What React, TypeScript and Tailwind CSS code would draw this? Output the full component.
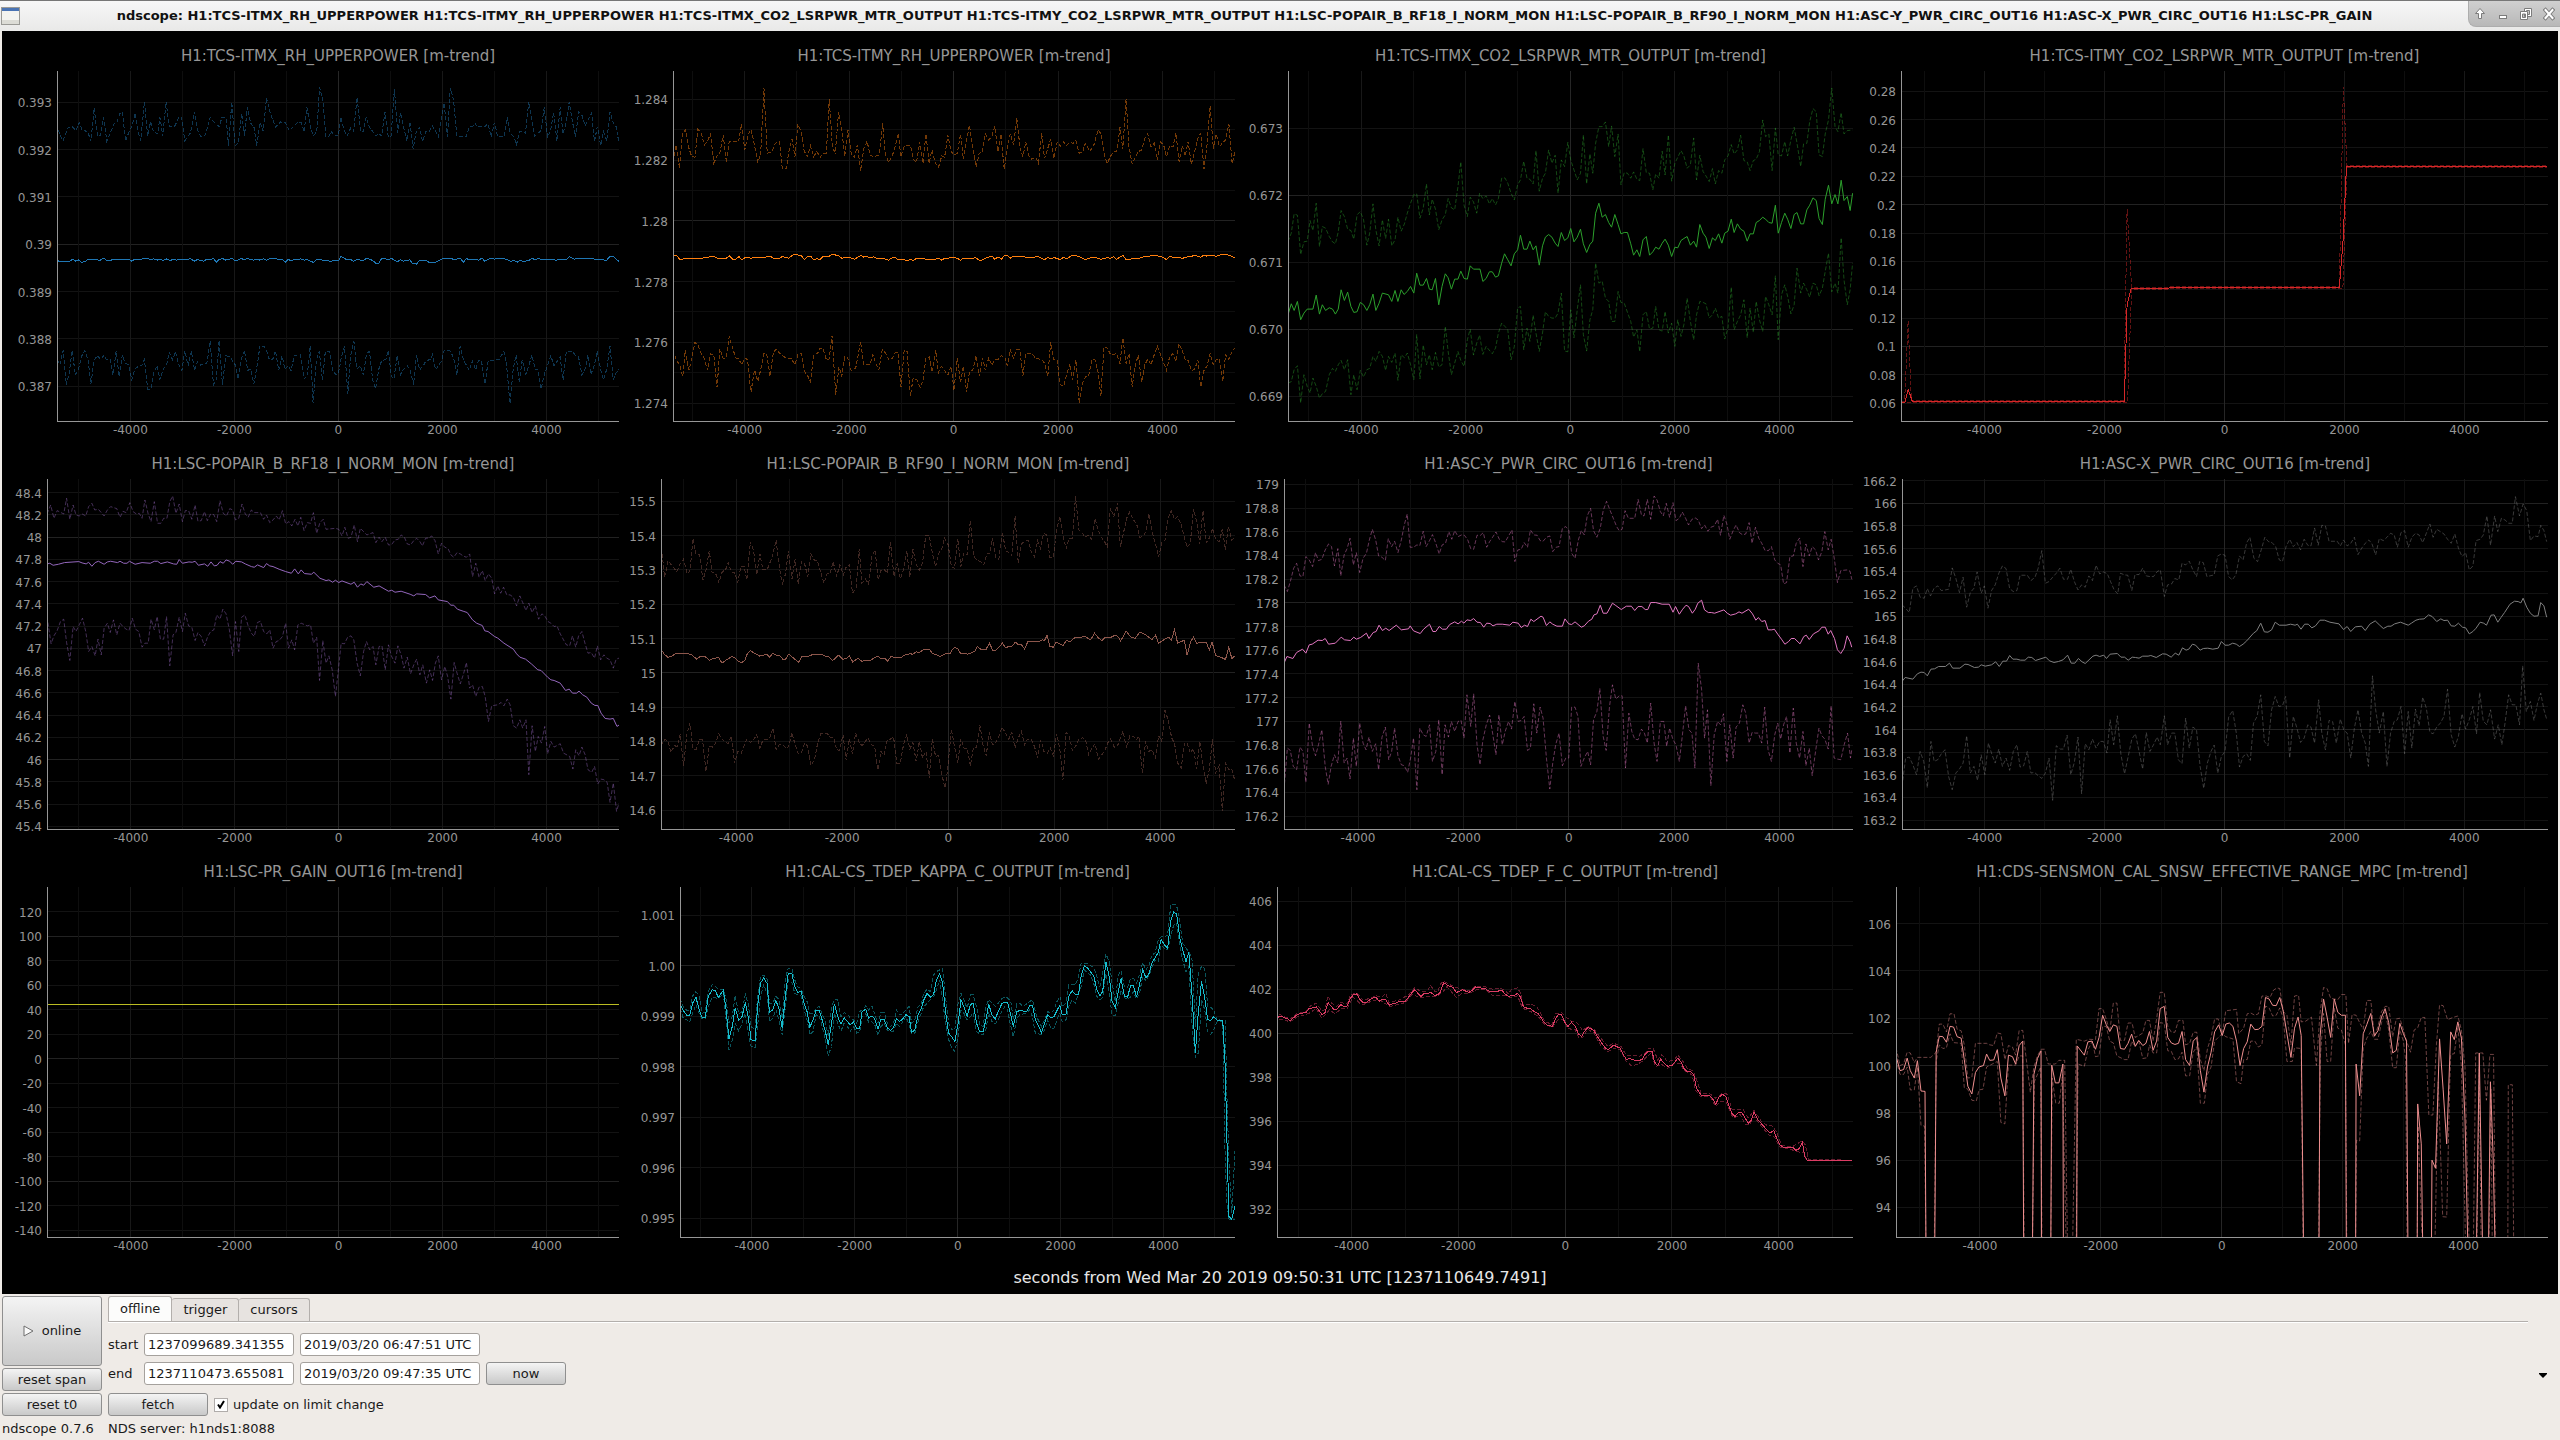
import React, { useState } from 'react';

type Panel = {
  title: string;
  axis: string; // left padding that holds the y tick labels
  x: [number, number];
  y: [number, number];
  ticks: string;
  strong: number[];
  minor?: number[];
  color: string;
  view: string;
  mean: string;
  max: string;
  min: string;
};

const X_TICKS = [-5000, -4000, -3000, -2000, -1000, 0, 1000, 2000, 3000, 4000, 5000];
const X_LABELS = [-4000, -2000, 0, 2000, 4000];

const PANELS: Panel[] = [
  {
    title: 'H1:TCS-ITMX_RH_UPPERPOWER',
    axis: 'pl-[46px]',
    x: [-5410, 5395],
    y: [0.386268, 0.39366],
    ticks: '0.393 0.392 0.391 0.39 0.389 0.388 0.387',
    strong: [0.39],
    color: '#1f77b4',
    view: '143 213 1376 1051',
    mean: '143,782 150,785 175,784 181,778 189,784 195,780 203,787 212,786 219,778 240,779 248,782 257,775 265,782 275,781 285,778 320,778 325,784 333,779 347,779 357,775 366,776 373,781 380,777 388,781 396,778 403,782 412,777 420,782 427,779 435,781 443,778 457,779 470,777 479,784 487,779 502,784 510,778 518,780 526,776 533,787 540,779 548,776 556,781 563,779 572,775 579,784 594,776 602,780 608,776 625,781 633,778 640,781 648,777 656,781 664,777 678,775 686,780 694,778 702,787 709,778 716,784 724,778 733,780 740,777 748,781 755,779 771,788 778,780 801,781 810,784 824,783 833,783 838,770 846,775 853,780 862,779 869,785 877,779 893,782 901,775 916,782 923,790 931,790 938,776 946,776 954,780 962,776 976,786 984,780 992,784 1007,780 1013,790 1023,793 1031,781 1046,781 1053,787 1070,787 1084,779 1091,775 1107,775 1115,780 1130,775 1138,787 1145,776 1153,780 1168,778 1175,781 1184,775 1190,784 1206,775 1214,778 1222,776 1245,778 1253,785 1262,782 1270,787 1278,781 1285,785 1298,782 1306,775 1313,780 1320,777 1340,779 1350,779 1365,781 1375,778 1390,780 1397,771 1410,778 1425,775 1452,775 1460,779 1489,781 1497,769 1505,770 1512,778 1519,785',
    max: '143,372 150,405 158,422 170,383 180,380 190,392 197,368 205,392 218,394 226,424 234,324 242,408 250,405 257,352 265,424 275,395 282,373 290,367 297,340 303,337 311,424 318,400 327,378 334,340 341,395 348,422 357,306 365,408 372,366 380,398 390,400 395,352 402,408 410,306 418,380 432,378 440,354 448,352 456,422 470,398 480,336 487,390 495,410 505,407 511,385 518,352 530,370 540,380 547,352 557,354 563,437 571,306 579,437 587,430 595,340 602,408 609,322 617,370 625,380 632,437 640,368 648,394 656,294 664,335 678,382 690,366 702,368 712,392 733,366 741,368 748,396 755,322 763,380 771,408 779,395 786,262 794,300 801,410 810,408 814,394 822,408 832,408 838,352 846,390 853,408 862,385 869,395 878,292 886,395 893,395 900,352 908,382 924,408 930,400 938,408 946,336 954,410 961,408 969,266 977,398 984,338 992,385 1000,424 1007,366 1015,448 1022,398 1031,382 1038,424 1046,394 1055,394 1062,378 1070,394 1077,410 1085,350 1091,310 1099,410 1106,264 1114,300 1122,408 1145,410 1153,380 1163,378 1168,370 1170,380 1190,380 1198,372 1206,410 1214,368 1222,410 1238,410 1245,352 1253,400 1262,412 1268,434 1276,394 1290,400 1298,306 1306,366 1313,408 1328,392 1336,322 1344,412 1351,395 1359,338 1367,424 1375,322 1382,402 1390,366 1397,306 1405,366 1413,410 1420,336 1428,345 1436,378 1452,340 1459,424 1466,380 1474,437 1481,395 1489,422 1497,336 1505,370 1512,380 1519,430',
    min: '143,1080 150,1095 158,1052 166,1155 173,1120 180,1052 188,1125 196,1108 203,1070 211,1053 219,1080 226,1152 234,1080 242,1068 250,1080 257,1068 265,1080 273,1078 280,1125 288,1053 295,1130 303,1066 310,1090 318,1095 326,1140 334,1108 342,1100 350,1098 357,1080 365,1168 373,1168 380,1120 388,1098 395,1140 403,1108 411,1098 418,1058 426,1080 433,1056 441,1095 449,1112 456,1053 464,1098 472,1054 480,1112 487,1085 495,1096 510,1090 518,1025 526,1155 533,1140 540,1022 548,1155 556,1068 566,1070 579,1095 586,1138 594,1080 602,1052 610,1112 617,1108 625,1153 633,1098 640,1038 650,1040 656,1052 663,1080 671,1080 678,1053 686,1112 694,1068 701,1108 709,1098 716,1112 724,1068 738,1064 748,1138 756,1125 763,1038 770,1210 778,1080 785,1055 793,1140 800,1055 810,1056 818,1112 826,1125 832,1122 840,1068 847,1040 855,1182 862,1066 870,1025 877,1108 885,1098 893,1125 901,1062 908,1055 916,1140 923,1168 931,1108 938,1082 948,1080 954,1053 962,1130 968,1138 976,1066 984,1125 992,1108 1000,1098 1007,1108 1016,1155 1023,1066 1031,1110 1040,1098 1047,1082 1057,1080 1062,1066 1070,1110 1084,1085 1091,1053 1107,1054 1115,1080 1122,1125 1130,1040 1138,1080 1152,1112 1160,1085 1168,1110 1175,1082 1182,1082 1191,1152 1199,1082 1225,1080 1237,1055 1244,1098 1252,1212 1260,1108 1267,1066 1275,1150 1282,1080 1291,1125 1306,1066 1314,1110 1320,1110 1328,1168 1336,1125 1352,1068 1360,1098 1375,1072 1382,1140 1390,1054 1405,1056 1413,1068 1420,1072 1428,1125 1436,1108 1443,1066 1450,1125 1459,1095 1466,1055 1474,1110 1481,1140 1489,1108 1497,1040 1505,1140 1512,1120 1519,1108',
  },
  {
    title: 'H1:TCS-ITMY_RH_UPPERPOWER',
    axis: 'pl-[44px]',
    x: [-5371, 5386],
    y: [1.273408, 1.284932],
    ticks: '1.284 1.282 1.28 1.278 1.276 1.274',
    strong: [1.28],
    minor: [1.283, 1.281, 1.279, 1.277, 1.275],
    color: '#ff7f0e',
    view: '82 213 1378 1051',
    mean: '82,770 90,766 98,778 106,778 113,775 155,775 166,772 182,770 190,775 213,775 221,768 228,778 236,778 244,770 251,781 259,773 275,775 282,773 305,773 320,769 328,775 343,775 350,770 366,775 373,768 381,763 397,768 404,779 412,770 420,770 427,779 435,777 443,779 450,769 465,769 473,763 488,768 496,775 511,772 527,778 542,767 550,772 558,769 565,775 573,771 580,775 596,775 611,781 620,773 627,773 634,780 649,780 656,784 664,779 671,782 680,775 695,775 702,779 725,778 733,775 741,781 748,775 771,774 779,775 787,781 794,775 817,775 825,774 833,782 841,780 848,775 864,769 871,778 879,771 887,778 894,768 902,767 909,775 917,769 940,769 947,773 962,772 978,771 993,780 1001,773 1009,778 1016,773 1031,779 1040,772 1047,777 1062,766 1078,770 1093,779 1109,773 1124,775 1131,779 1147,773 1155,776 1162,770 1170,779 1178,771 1185,767 1193,779 1231,774 1240,769 1246,771 1254,767 1277,769 1292,779 1300,769 1308,773 1323,773 1331,776 1338,772 1353,770 1361,766 1376,772 1384,766 1391,769 1399,766 1414,769 1430,763 1445,766 1460,774',
    max: '82,485 90,435 98,505 105,398 113,390 121,445 128,470 136,472 143,388 151,400 159,435 166,425 174,402 182,490 190,468 197,458 205,405 213,488 220,424 235,424 243,425 250,372 258,450 266,405 273,388 281,430 290,488 297,460 305,264 313,460 325,455 333,430 343,426 350,505 360,507 366,455 374,418 381,470 388,372 396,395 404,455 412,470 419,438 427,470 435,455 443,472 450,460 458,460 465,297 473,445 480,458 488,336 496,390 503,470 511,390 519,462 527,472 534,435 542,512 550,445 558,424 565,465 573,470 588,466 596,369 603,465 611,487 620,466 627,440 634,400 641,470 650,436 664,437 672,478 679,488 687,426 695,490 702,402 710,490 717,450 725,488 733,502 741,468 748,472 756,405 764,455 771,465 779,460 787,402 794,478 802,420 809,375 817,445 825,502 833,460 840,458 848,402 856,420 863,412 871,380 879,455 886,402 894,507 902,445 909,402 917,435 925,354 933,445 940,470 947,426 955,468 962,478 971,472 978,490 986,400 993,475 1001,445 1008,418 1016,475 1024,426 1032,438 1040,426 1046,438 1055,428 1063,430 1070,422 1078,460 1086,458 1093,430 1104,455 1115,432 1124,390 1132,402 1140,470 1147,490 1155,468 1162,456 1170,455 1178,382 1185,448 1193,297 1200,440 1208,492 1216,470 1223,455 1231,450 1239,415 1246,402 1254,440 1262,430 1269,480 1277,426 1285,435 1292,470 1300,437 1308,440 1315,400 1323,485 1331,438 1338,468 1345,425 1353,492 1361,455 1368,418 1376,400 1384,508 1391,440 1399,318 1407,448 1414,402 1422,440 1430,428 1437,420 1445,372 1453,490 1460,455',
    min: '82,1050 90,1080 98,1095 106,1130 112,1052 121,1112 128,1075 136,1028 144,1038 151,1060 159,1078 167,1112 174,1062 182,1065 190,1163 197,1048 205,1075 212,1075 220,1010 228,1045 236,1075 243,1078 251,1095 258,1075 265,1080 273,1178 282,1110 290,1145 297,1110 305,1062 312,1065 320,1130 328,1058 335,1048 343,1060 358,1074 372,1076 381,1095 389,1062 397,1062 404,1115 412,1128 419,1145 427,1065 436,1062 443,1045 450,1046 458,1080 465,1078 472,1008 481,1185 489,1102 496,1130 503,1070 510,1072 519,1112 530,1105 542,1026 550,1096 565,1095 572,1065 580,1095 587,1110 595,1050 603,1060 611,1080 620,1075 627,1058 634,1060 641,1162 649,1050 656,1056 664,1188 671,1135 680,1140 688,1163 695,1142 702,1075 710,1072 718,1118 726,1052 733,1118 740,1100 756,1126 764,1100 771,1172 779,1076 787,1148 794,1100 802,1178 809,1115 817,1112 825,1068 833,1130 841,1075 848,1112 856,1075 864,1096 871,1080 879,1080 887,1068 895,1072 902,1098 909,1050 917,1075 925,1050 932,1048 940,1128 947,1062 962,1060 970,1075 986,1080 993,1090 1001,1130 1008,1028 1016,1080 1024,1082 1031,1155 1040,1158 1055,1092 1062,1140 1070,1080 1078,1210 1086,1150 1094,1130 1101,1128 1109,1080 1116,1078 1124,1115 1131,1190 1139,1040 1147,1045 1155,1065 1170,1062 1178,1092 1185,1014 1193,1092 1200,1062 1208,1162 1215,1100 1223,1065 1231,1148 1239,1095 1246,1078 1254,1095 1262,1065 1270,1040 1277,1062 1292,1112 1300,1070 1308,1062 1315,1085 1322,1032 1330,1050 1338,1080 1345,1082 1353,1112 1361,1110 1369,1080 1376,1162 1384,1112 1391,1100 1399,1062 1407,1095 1414,1080 1422,1078 1430,1145 1437,1065 1445,1080 1453,1055 1460,1044',
  },
  {
    title: 'H1:TCS-ITMX_CO2_LSRPWR_MTR_OUTPUT',
    axis: 'pl-[43px]',
    x: [-5398, 5406],
    y: [0.668627, 0.673856],
    ticks: '0.673 0.672 0.671 0.670 0.669',
    strong: [0.672, 0.67],
    color: '#2ca02c',
    view: '121 213 1383 1051',
    mean: '121,945 129,912 136,932 144,905 152,960 160,940 168,928 182,928 190,886 198,943 205,915 213,932 222,924 230,928 237,943 244,928 251,870 259,902 267,877 275,920 282,938 290,936 298,908 306,915 314,932 321,915 329,883 336,932 344,910 352,880 367,885 375,905 383,872 390,905 398,870 405,884 413,875 421,860 429,880 436,820 444,856 452,856 460,836 467,868 474,870 482,836 490,915 498,860 506,822 513,834 521,868 529,838 537,838 544,814 552,836 560,838 567,798 575,808 591,808 598,845 606,836 614,816 621,816 629,832 636,828 644,790 651,762 659,780 667,798 675,762 683,750 690,706 698,748 706,748 713,724 721,750 728,738 736,796 744,738 751,712 759,704 767,712 775,730 782,740 790,698 798,722 806,714 813,686 821,726 829,712 837,688 844,732 852,758 860,734 867,724 874,640 882,610 890,652 898,644 906,668 913,682 921,644 929,674 936,702 944,698 952,698 960,732 967,766 975,750 982,770 990,720 998,710 1006,766 1014,756 1021,742 1029,748 1037,730 1044,718 1052,736 1060,770 1068,742 1075,744 1083,722 1090,716 1098,710 1106,736 1114,724 1121,742 1129,674 1137,700 1144,712 1152,746 1160,714 1167,722 1175,702 1183,730 1190,700 1198,694 1206,658 1213,698 1221,672 1229,688 1237,694 1245,724 1252,702 1260,702 1267,668 1275,662 1283,652 1290,658 1298,668 1306,670 1314,616 1321,700 1329,668 1337,640 1344,658 1352,686 1360,644 1367,638 1376,672 1383,672 1391,630 1398,616 1406,594 1414,602 1421,656 1429,674 1436,598 1444,556 1452,612 1460,584 1467,612 1475,541 1482,602 1490,590 1497,632 1503,580',
    max: '121,725 129,700 136,642 144,646 152,764 160,726 168,724 175,662 182,692 190,610 198,740 205,680 213,685 222,710 230,726 237,732 244,696 251,632 259,650 267,688 275,692 282,718 290,645 298,635 306,660 314,736 321,700 329,612 336,690 344,738 352,660 360,716 367,658 375,738 383,720 390,652 398,694 406,672 413,640 421,610 429,584 436,582 444,655 452,625 460,552 467,645 474,598 482,628 490,690 498,660 506,645 513,596 521,624 529,630 537,560 544,486 552,616 560,650 567,592 575,606 583,640 590,580 598,596 606,588 614,612 621,596 629,615 636,596 644,535 652,534 659,550 667,580 675,600 683,555 690,540 698,484 706,535 713,538 721,552 728,452 736,574 744,535 751,520 759,450 767,490 775,466 782,580 790,480 798,500 806,427 813,480 821,510 829,540 837,520 844,405 852,552 860,462 867,520 874,430 882,380 890,380 898,366 906,440 913,378 921,470 929,402 936,555 944,518 952,520 960,535 967,516 975,538 982,542 990,446 998,518 1006,520 1014,570 1021,522 1029,535 1037,454 1044,525 1052,405 1060,544 1068,490 1075,472 1083,452 1090,468 1098,505 1106,495 1114,414 1121,540 1129,466 1137,515 1144,528 1152,545 1160,506 1167,552 1175,512 1183,520 1190,480 1198,468 1206,434 1213,462 1221,450 1229,406 1237,482 1245,486 1252,512 1260,482 1267,478 1275,455 1283,360 1290,410 1298,402 1306,512 1314,384 1321,465 1329,468 1337,425 1344,468 1352,420 1360,382 1367,430 1376,500 1383,432 1391,430 1398,365 1406,326 1414,335 1421,465 1429,470 1436,402 1444,360 1452,264 1460,380 1467,395 1475,338 1482,402 1490,392 1503,390',
    min: '121,1150 129,1146 136,1110 144,1098 152,1210 160,1125 168,1160 175,1180 182,1135 190,1160 198,1195 205,1182 213,1175 222,1125 230,1106 237,1115 244,1095 251,1082 259,1110 267,1080 275,1185 282,1125 290,1170 298,1112 306,1132 314,1110 321,1106 329,1070 336,1085 344,1055 352,1070 360,1112 367,1070 375,1088 383,1060 390,1142 398,1065 406,1074 413,1060 421,1095 429,1140 436,1004 444,1138 452,1036 460,1095 467,1065 474,1110 482,1058 490,1102 498,1095 506,980 513,1055 521,1125 529,1090 537,1055 544,1082 552,1100 560,1020 567,988 575,1066 583,1030 590,1006 598,1064 606,1040 621,1062 629,1045 636,1000 644,970 652,980 659,990 667,1080 675,1040 683,925 690,920 698,1050 706,985 713,1025 721,946 728,1000 736,1055 744,1000 751,936 759,950 767,955 775,955 782,940 790,880 798,1054 806,1056 813,930 821,1014 829,930 837,855 844,1005 852,1054 860,960 867,930 874,790 882,850 890,844 898,895 906,905 913,965 921,965 929,875 936,908 944,910 952,938 960,965 967,1012 975,990 982,1056 990,945 998,935 1006,988 1014,985 1021,920 1029,990 1037,994 1044,935 1052,1000 1060,970 1068,1040 1075,960 1083,1010 1090,975 1098,895 1106,965 1114,1020 1121,945 1129,905 1137,908 1144,912 1152,955 1160,945 1167,925 1175,955 1183,950 1190,1018 1198,985 1206,862 1213,990 1221,965 1229,945 1237,900 1245,1014 1252,925 1260,998 1267,905 1275,960 1283,995 1290,890 1298,915 1306,945 1314,828 1321,1020 1329,885 1337,855 1344,890 1352,942 1360,915 1367,805 1376,880 1383,850 1391,870 1398,892 1406,850 1414,855 1421,888 1429,865 1436,815 1444,760 1452,876 1460,850 1467,880 1475,714 1482,840 1490,915 1497,870 1503,790',
  },
  {
    title: 'H1:TCS-ITMY_CO2_LSRPWR_MTR_OUTPUT',
    axis: 'pl-[38px]',
    x: [-5393, 5393],
    y: [0.04731, 0.29434],
    ticks: '0.28 0.26 0.24 0.22 0.2 0.18 0.16 0.14 0.12 0.1 0.08 0.06',
    strong: [0.2, 0.1],
    color: '#d62728',
    view: '95 213 1448 1051',
    mean: '95,1207 104,1207 111,1168 120,1204 595,1204 601,915 610,865 695,865 700,862 710,864 760,864 768,862 785,864 832,864 835,862 1076,862 1084,730 1092,499 1541,499',
    max: '95,1206 103,1206 111,965 118,1202 594,1201 601,627 611,862 1076,860 1085,262 1093,497 1541,497',
    min: '95,1209 110,1209 118,1207 602,1207 611,868 1084,866 1093,502 1541,502',
  },
  {
    title: 'H1:LSC-POPAIR_B_RF18_I_NORM_MON',
    axis: 'pl-[36px]',
    x: [-5614, 5395],
    y: [45.376, 48.5228],
    ticks: '48.4 48.2 48 47.8 47.6 47.4 47.2 47 46.8 46.6 46.4 46.2 46 45.8 45.6 45.4',
    strong: [48, 46],
    color: '#9467bd',
    view: '117 87 1402 1051',
    mean: '117,342 124,340 132,346 145,343 160,338 195,335 203,339 213,342 219,337 227,349 235,338 243,334 257,343 265,336 273,334 290,338 296,334 305,340 313,340 319,334 333,343 350,338 370,340 380,334 388,334 396,341 412,336 427,342 435,343 441,329 449,340 465,336 473,337 480,334 488,346 503,342 511,349 519,336 527,348 534,346 541,335 549,340 556,330 565,334 572,343 580,334 594,336 603,342 618,350 625,352 633,345 648,353 655,341 663,348 671,350 686,358 702,365 716,370 724,357 733,372 740,360 748,371 765,373 771,367 786,385 801,392 808,390 817,397 824,391 832,398 840,393 862,403 870,397 878,412 886,402 893,406 901,395 918,412 931,408 954,424 962,421 970,427 985,424 1007,433 1016,438 1023,432 1045,434 1055,444 1068,438 1076,450 1098,455 1107,466 1114,466 1123,478 1137,484 1147,488 1160,510 1170,520 1184,527 1190,543 1198,545 1214,560 1222,565 1237,580 1260,598 1268,612 1276,622 1290,628 1305,643 1320,660 1328,662 1344,682 1352,690 1360,692 1375,700 1388,722 1397,718 1405,730 1415,730 1421,724 1430,735 1440,742 1451,760 1460,767 1467,767 1475,790 1485,806 1497,808 1505,806 1514,830 1519,826',
    max: '117,192 126,165 134,205 142,182 158,192 165,145 173,208 181,165 188,195 196,198 203,192 212,198 219,170 227,160 234,180 243,178 257,198 265,180 273,170 288,176 296,202 303,184 311,188 320,158 328,185 336,192 343,190 350,205 357,150 365,192 372,215 380,155 388,220 396,220 403,205 411,205 418,155 425,138 433,190 441,162 449,215 456,182 464,182 472,208 480,165 487,214 495,212 503,185 510,212 518,192 526,194 533,215 541,152 549,190 557,198 565,176 572,180 579,210 587,205 595,162 603,192 610,202 618,180 625,188 640,188 648,208 655,195 663,218 671,210 679,198 686,210 694,182 702,222 710,215 717,228 725,208 732,228 739,202 747,242 755,218 763,220 770,188 778,250 786,218 794,208 801,238 824,235 832,238 840,258 847,232 855,265 862,262 870,225 878,275 885,235 893,245 901,255 916,248 923,278 931,262 938,275 946,262 954,285 961,285 970,270 978,268 985,255 993,262 1000,282 1008,285 1016,272 1023,265 1031,275 1037,288 1045,265 1053,264 1060,258 1068,272 1076,312 1084,280 1092,292 1100,296 1107,315 1114,322 1122,308 1130,312 1137,318 1145,322 1153,312 1160,380 1168,340 1176,382 1184,362 1191,392 1199,372 1207,385 1214,432 1222,408 1229,430 1236,412 1244,435 1252,435 1260,442 1268,468 1276,438 1283,458 1291,482 1298,460 1306,488 1314,468 1322,508 1330,492 1337,498 1345,515 1352,520 1360,530 1367,528 1375,552 1383,570 1390,585 1398,588 1405,558 1413,592 1420,558 1428,545 1436,582 1443,610 1451,608 1459,625 1466,588 1474,630 1482,615 1489,625 1497,630 1505,655 1512,628 1519,625',
    min: '117,500 127,582 134,558 142,542 150,515 158,508 165,578 173,632 181,530 188,545 196,525 204,505 212,545 219,605 227,590 235,618 242,568 250,615 257,535 265,520 272,548 280,510 288,555 296,520 303,530 311,538 318,542 326,505 334,538 342,545 350,592 357,580 365,580 372,508 380,540 387,500 395,568 403,568 410,500 418,648 426,555 433,548 441,502 449,545 456,490 464,528 472,532 480,572 487,548 495,560 503,588 511,560 518,545 526,540 533,495 541,508 548,478 556,492 564,540 572,618 579,515 587,605 594,502 602,495 610,528 618,550 625,560 633,518 640,514 648,545 656,552 663,540 671,595 679,575 686,572 694,560 702,520 709,595 717,570 724,600 732,525 740,520 755,528 763,525 770,580 778,562 785,692 793,572 801,640 808,618 816,660 824,740 832,650 838,580 846,582 854,562 862,558 869,570 877,640 885,678 893,605 900,575 908,600 916,590 923,645 931,590 938,588 946,660 954,585 961,618 970,640 977,588 985,615 992,655 1000,622 1008,672 1016,645 1023,628 1031,675 1038,645 1047,700 1055,660 1062,692 1069,640 1076,618 1084,690 1092,650 1099,680 1107,748 1115,638 1122,670 1130,702 1138,672 1145,638 1153,715 1160,705 1168,740 1176,712 1184,710 1191,740 1199,815 1207,768 1222,765 1230,758 1237,768 1245,748 1252,765 1260,828 1268,835 1276,810 1283,835 1291,810 1298,975 1306,828 1314,905 1321,860 1329,880 1337,830 1344,912 1352,875 1360,892 1375,882 1383,910 1398,920 1406,958 1413,900 1421,918 1428,892 1436,915 1443,960 1452,968 1459,950 1467,1003 1474,988 1482,990 1490,998 1497,1058 1505,1000 1513,1085 1519,1060',
  },
  {
    title: 'H1:LSC-POPAIR_B_RF90_I_NORM_MON',
    axis: 'pl-[32px]',
    x: [-5418, 5410],
    y: [14.5447, 15.565],
    ticks: '15.5 15.4 15.3 15.2 15.1 15 14.9 14.8 14.7 14.6',
    strong: [15],
    color: '#8c564b',
    view: '82 87 1451 1051',
    mean: '82,598 91,614 100,623 110,618 118,612 145,610 160,615 172,628 182,619 197,622 204,632 213,626 228,623 236,640 245,632 261,620 270,625 278,635 286,638 294,632 300,612 308,603 318,610 332,619 349,613 357,622 364,610 373,616 382,617 390,628 397,628 405,613 414,622 430,637 438,620 452,620 466,614 488,614 497,619 505,620 516,632 531,616 541,628 550,627 558,617 567,637 580,625 590,635 598,631 610,632 629,619 638,626 648,625 655,634 663,620 672,623 690,622 697,616 712,612 718,613 727,606 735,608 748,598 760,598 768,610 788,620 800,612 812,612 818,600 825,592 832,597 840,612 848,610 857,613 875,605 882,590 890,598 903,600 912,580 921,602 930,600 945,580 953,593 970,588 978,577 985,585 993,585 1001,597 1010,574 1020,576 1035,576 1045,570 1052,571 1058,556 1065,590 1074,592 1081,577 1098,587 1107,572 1115,576 1130,562 1140,564 1152,559 1168,570 1178,550 1187,563 1196,573 1205,562 1220,562 1230,556 1237,560 1244,573 1258,544 1268,560 1280,566 1293,546 1308,556 1323,569 1332,556 1340,581 1350,572 1365,562 1372,571 1380,540 1388,580 1405,571 1412,616 1420,578 1428,562 1436,580 1460,577 1468,600 1475,576 1484,617 1497,622 1509,629 1517,592 1525,626 1533,618',
    max: '82,275 91,382 100,333 110,348 122,365 130,342 139,328 148,370 155,365 163,265 171,315 180,315 188,390 196,360 204,302 211,368 220,370 228,398 237,365 245,360 252,338 260,366 268,368 276,398 284,350 292,348 299,390 308,276 316,302 324,375 332,312 340,360 350,360 357,340 365,312 373,270 381,350 389,405 397,370 404,302 413,388 421,328 429,402 437,335 445,342 453,380 461,312 469,330 477,332 485,365 494,400 502,372 510,370 517,335 526,380 534,345 543,375 550,352 558,345 566,430 575,415 583,298 590,400 599,388 607,402 615,320 623,300 631,390 638,362 646,358 654,370 662,276 671,380 679,340 687,386 695,360 703,302 711,380 719,298 727,345 735,360 743,340 751,258 760,256 768,310 776,350 784,310 792,295 799,264 808,285 816,350 824,355 832,266 840,350 848,308 856,314 864,212 872,318 880,330 890,335 898,345 906,312 913,312 920,264 929,325 936,328 945,246 953,302 961,308 969,318 977,198 985,340 993,282 1001,274 1010,272 1018,305 1026,320 1034,272 1041,295 1049,250 1057,255 1065,322 1074,322 1082,240 1090,200 1098,258 1106,296 1114,265 1122,265 1130,138 1138,240 1147,250 1154,262 1162,256 1170,268 1179,206 1187,240 1195,262 1203,275 1210,290 1218,174 1227,200 1236,160 1243,290 1251,250 1259,205 1267,186 1276,210 1284,220 1292,262 1300,260 1308,245 1315,190 1323,245 1332,282 1340,320 1348,278 1356,272 1364,205 1372,182 1380,208 1388,200 1397,225 1405,262 1412,292 1420,280 1428,178 1436,215 1444,282 1452,182 1460,278 1468,265 1476,236 1484,268 1493,275 1501,238 1509,300 1516,230 1525,270 1533,262',
    min: '82,888 91,870 99,872 107,908 116,888 123,890 131,852 139,950 147,855 155,820 163,898 171,898 179,870 187,870 196,965 204,890 212,892 220,880 228,852 237,870 252,882 260,858 268,940 276,905 285,910 299,868 308,878 316,870 324,855 332,895 340,870 350,870 357,865 365,835 373,900 381,885 390,885 398,896 405,890 413,848 421,885 429,912 437,908 445,880 453,890 461,948 470,930 478,880 486,852 502,852 510,862 518,862 526,900 534,902 542,855 550,932 558,868 566,912 574,850 582,875 590,888 605,865 614,885 622,890 630,962 638,905 646,918 654,870 662,868 670,862 678,940 687,940 695,885 703,855 711,898 719,878 727,935 735,875 743,925 752,905 760,985 768,868 776,920 784,918 792,975 800,1015 807,955 816,838 824,890 832,940 840,868 848,895 856,895 864,948 872,892 880,892 888,825 896,885 904,918 912,848 920,885 928,880 936,860 944,832 953,850 961,868 969,848 977,895 985,865 993,845 1001,885 1009,868 1018,870 1026,890 1034,925 1042,870 1050,905 1058,912 1066,895 1074,920 1082,852 1090,895 1098,992 1106,848 1114,860 1122,902 1130,890 1138,870 1147,864 1155,870 1163,915 1171,895 1179,882 1188,928 1203,905 1212,878 1218,868 1228,892 1236,888 1250,845 1259,895 1267,858 1276,860 1284,870 1290,860 1299,972 1307,875 1315,905 1323,900 1332,925 1340,858 1348,875 1356,782 1364,810 1373,865 1380,880 1388,940 1397,955 1405,880 1412,880 1420,910 1428,895 1436,958 1444,875 1452,945 1460,1002 1468,960 1476,868 1484,970 1493,948 1501,1085 1509,940 1517,958 1525,958 1533,995',
  },
  {
    title: 'H1:ASC-Y_PWR_CIRC_OUT16',
    axis: 'pl-[39px]',
    x: [-5405, 5397],
    y: [176.092, 179.045],
    ticks: '179 178.8 178.6 178.4 178.2 178 177.8 177.6 177.4 177.2 177 176.8 176.6 176.4 176.2',
    strong: [178],
    color: '#e377c2',
    view: '106 87 1353 1051',
    mean: '106,640 113,620 127,626 136,608 150,598 158,610 166,585 173,583 187,571 197,572 204,566 212,583 228,580 242,562 250,570 264,572 272,562 278,568 288,563 302,550 308,566 318,548 325,545 332,526 340,542 348,535 356,542 373,526 385,540 402,537 406,528 414,543 430,551 438,538 452,523 460,545 467,545 475,530 483,538 492,538 500,524 512,516 520,522 528,514 534,520 541,510 550,512 557,506 565,517 573,518 581,532 588,520 596,521 603,528 612,523 625,523 643,526 650,517 663,520 670,533 678,526 685,530 693,508 700,515 717,499 722,502 730,527 738,516 745,523 755,529 768,529 774,507 783,522 790,524 798,516 813,532 820,528 830,514 838,508 843,495 850,492 858,466 865,490 874,490 887,460 895,467 908,479 920,469 932,469 940,482 948,470 957,470 965,479 971,479 978,458 990,458 1005,463 1022,463 1031,487 1037,470 1046,493 1054,478 1062,466 1068,470 1077,490 1084,478 1090,460 1099,451 1106,480 1115,488 1122,488 1130,490 1152,480 1160,490 1168,496 1180,492 1188,486 1195,490 1211,478 1220,492 1228,511 1234,503 1242,515 1250,512 1257,540 1266,540 1272,538 1280,553 1290,570 1297,583 1306,575 1312,566 1320,566 1333,582 1342,560 1348,556 1355,569 1365,552 1378,543 1385,532 1393,532 1400,553 1406,542 1415,566 1422,600 1430,611 1438,595 1445,558 1452,575 1456,592',
    max: '106,405 114,425 121,395 129,355 136,340 144,378 151,380 158,320 166,330 174,350 181,308 188,332 196,328 204,300 212,282 219,290 226,348 234,296 241,378 249,315 256,296 263,265 271,345 278,308 286,368 294,325 302,310 309,270 316,238 324,270 331,318 339,322 347,332 354,266 362,290 369,274 377,308 385,270 392,225 399,192 406,292 414,292 422,285 429,287 437,244 444,290 452,272 459,254 467,280 475,312 482,285 490,280 498,245 505,268 512,242 520,260 528,255 535,256 543,270 550,296 557,298 565,256 573,256 580,248 588,292 595,275 602,262 610,246 618,268 625,275 632,276 640,258 648,240 655,335 662,300 670,298 677,278 685,292 692,240 700,255 708,256 715,272 722,274 730,262 738,258 745,305 753,292 760,290 768,235 776,230 783,240 790,310 798,325 806,270 813,242 820,255 827,198 835,175 842,242 850,262 858,235 865,182 873,154 881,180 889,205 897,230 903,242 910,238 917,182 925,205 940,205 948,148 956,195 962,198 970,148 978,208 986,138 993,150 1001,185 1008,198 1015,160 1023,202 1031,158 1038,212 1046,205 1053,186 1061,205 1068,225 1076,208 1084,204 1091,210 1099,236 1106,225 1114,244 1121,232 1129,228 1137,208 1144,256 1152,196 1159,222 1166,268 1174,242 1181,225 1189,248 1197,255 1204,252 1212,218 1219,280 1227,232 1235,265 1242,280 1250,302 1258,302 1265,290 1273,330 1280,340 1287,345 1294,402 1301,398 1309,320 1317,318 1324,280 1332,264 1340,350 1347,282 1355,318 1362,290 1370,300 1377,330 1385,305 1392,245 1400,300 1407,268 1415,330 1422,398 1430,362 1445,360 1452,364 1456,388',
    min: '106,1020 114,895 121,902 128,950 136,960 144,892 151,905 158,998 166,820 174,890 181,918 188,885 196,840 204,950 211,1004 218,950 226,915 234,940 241,814 249,940 256,925 263,988 271,865 278,950 286,820 294,880 301,900 308,862 316,905 324,882 331,960 339,862 347,832 355,930 362,905 369,835 377,918 385,945 392,948 400,968 407,925 414,865 422,1020 429,835 437,855 444,860 452,825 459,935 467,905 474,810 482,975 489,825 497,862 504,815 512,845 520,815 527,812 534,865 541,735 550,830 557,732 565,885 572,945 579,870 587,825 595,796 602,850 610,915 617,795 625,885 632,845 640,815 647,838 655,755 663,815 670,812 677,800 685,902 692,896 700,762 707,850 715,772 722,805 730,925 738,1018 745,940 752,885 760,850 768,948 776,925 783,925 790,772 798,772 805,800 812,950 820,925 828,905 835,945 842,810 850,785 857,716 865,860 872,902 880,770 887,705 895,748 903,738 910,738 918,955 926,790 933,845 940,868 948,870 956,838 963,850 970,880 978,760 986,880 993,935 1001,815 1009,815 1016,890 1023,835 1031,870 1038,885 1046,935 1053,860 1061,768 1069,840 1076,850 1083,955 1091,640 1099,720 1106,865 1113,780 1121,1008 1129,855 1137,815 1144,825 1151,792 1159,935 1166,825 1174,925 1181,832 1189,820 1197,765 1204,790 1212,880 1219,848 1227,850 1234,850 1242,880 1249,772 1257,900 1265,935 1273,855 1280,820 1287,868 1294,825 1301,800 1309,910 1317,775 1324,880 1332,925 1340,845 1347,948 1355,895 1362,978 1370,905 1378,835 1385,858 1392,868 1400,898 1407,768 1414,925 1422,928 1430,930 1438,885 1446,850 1453,925 1456,900',
  },
  {
    title: 'H1:ASC-X_PWR_CIRC_OUT16',
    axis: 'pl-[39px]',
    x: [-5381, 5396],
    y: [163.1205, 166.215],
    ticks: '166.2 166 165.8 165.6 165.4 165.2 165 164.8 164.6 164.4 164.2 164 163.8 163.6 163.4 163.2',
    strong: [166, 164],
    color: '#7f7f7f',
    view: '116 87 1428 1051',
    mean: '116,695 123,683 140,688 150,672 158,667 165,668 172,678 180,658 188,657 197,650 212,650 221,640 228,655 244,655 255,643 262,644 276,653 285,652 291,645 300,649 314,645 323,636 331,650 339,634 347,634 354,617 361,628 370,628 378,631 388,631 395,622 403,623 411,632 434,622 442,633 452,638 462,635 472,630 482,616 490,640 498,640 506,626 514,636 521,641 538,619 545,616 553,620 562,616 568,626 576,613 592,611 600,622 608,622 616,631 625,622 632,623 640,625 648,619 660,619 666,617 678,623 692,612 700,613 711,622 720,610 728,616 736,594 744,601 750,598 758,583 765,586 775,601 782,596 792,595 803,598 815,595 822,575 830,586 838,586 847,580 855,583 862,590 870,583 878,573 893,550 900,543 909,520 917,546 925,547 933,540 941,517 950,526 965,526 975,523 985,526 990,523 998,538 1006,523 1014,523 1022,534 1030,528 1040,511 1050,511 1062,517 1082,522 1092,539 1100,530 1108,545 1118,531 1132,529 1140,542 1150,523 1162,513 1172,526 1180,536 1190,529 1197,529 1205,522 1218,517 1235,526 1242,520 1252,511 1260,508 1270,507 1280,495 1288,500 1298,515 1307,507 1314,512 1322,511 1330,528 1338,529 1346,520 1355,532 1362,534 1370,552 1378,545 1385,535 1394,517 1402,520 1408,526 1418,496 1425,495 1433,517 1440,503 1448,488 1460,463 1470,454 1478,455 1484,459 1489,445 1497,472 1505,490 1513,499 1522,498 1528,458 1535,468 1541,502',
    max: '116,465 124,475 132,488 140,415 148,408 156,442 165,445 172,416 179,438 187,415 195,408 203,422 212,420 219,418 227,354 235,385 243,428 251,382 259,472 267,428 275,415 282,366 291,430 298,408 306,475 314,422 322,405 330,370 338,348 346,356 354,416 362,425 370,422 377,376 393,376 401,392 410,382 417,355 425,302 433,400 441,395 449,382 457,370 465,355 473,388 482,388 489,358 497,395 505,420 513,405 521,412 529,378 537,392 545,346 553,372 562,366 570,372 577,395 585,420 593,432 599,370 608,375 615,376 624,422 631,374 640,374 648,355 656,378 664,380 672,380 680,365 687,360 696,440 703,405 712,402 719,386 728,390 735,340 743,345 751,334 759,360 767,380 774,335 782,338 790,380 806,375 814,318 822,312 830,316 838,380 846,390 854,375 862,318 870,330 878,278 885,262 894,325 902,335 910,300 918,262 926,275 934,278 942,290 950,330 957,335 965,290 973,268 981,290 989,278 997,300 1005,268 1013,286 1020,288 1028,234 1036,286 1044,226 1052,228 1060,274 1078,274 1085,288 1092,270 1100,288 1108,280 1116,262 1124,314 1132,295 1140,280 1148,270 1155,282 1163,315 1171,266 1180,272 1188,262 1196,250 1204,255 1211,292 1219,248 1227,242 1235,292 1243,262 1251,250 1259,255 1267,278 1275,250 1283,222 1290,262 1298,238 1306,245 1314,252 1322,268 1330,280 1338,252 1346,295 1354,320 1362,308 1370,360 1378,348 1385,272 1394,268 1401,255 1409,198 1417,286 1426,198 1433,245 1441,205 1449,210 1457,220 1465,220 1472,140 1481,198 1489,162 1497,182 1505,272 1513,258 1522,260 1528,226 1535,242 1541,275',
    min: '116,1010 124,925 132,922 140,945 148,975 156,905 164,935 172,1014 180,875 187,935 195,930 203,912 211,900 219,980 227,1020 235,970 243,958 251,940 259,858 267,970 275,950 283,992 291,915 299,975 307,880 315,915 322,940 330,898 338,950 346,925 354,962 362,905 370,885 377,952 385,948 393,905 401,970 409,968 417,978 425,986 433,970 441,925 449,1052 457,888 466,898 473,898 481,856 489,975 497,938 505,862 513,1032 521,882 529,900 537,868 545,895 553,875 561,875 569,910 576,810 584,885 592,798 600,915 608,972 616,920 624,868 632,852 640,905 648,958 656,848 664,905 672,885 680,862 687,885 696,798 703,885 712,850 719,850 727,930 735,942 743,805 751,895 759,832 767,840 775,950 783,1016 791,940 799,905 806,886 814,970 822,920 830,905 838,802 847,782 855,850 862,952 870,920 878,912 886,932 893,820 901,800 909,735 917,875 925,888 933,780 941,740 949,770 957,768 964,740 973,925 981,800 989,835 997,878 1005,865 1013,825 1020,832 1028,880 1037,750 1044,850 1052,900 1060,812 1068,816 1076,880 1085,808 1093,842 1100,850 1108,925 1116,835 1124,780 1132,850 1140,880 1147,950 1156,678 1163,780 1171,850 1180,785 1188,950 1196,850 1204,815 1211,810 1219,770 1227,912 1235,785 1243,895 1251,778 1259,828 1267,742 1275,775 1283,848 1290,852 1298,832 1306,820 1314,800 1322,718 1330,855 1338,892 1346,860 1354,792 1362,838 1370,810 1378,770 1386,852 1393,728 1401,815 1409,825 1417,780 1426,868 1434,825 1442,885 1449,820 1457,735 1465,765 1473,765 1481,825 1488,648 1496,785 1505,755 1513,812 1521,760 1528,730 1535,780 1541,808',
  },
  {
    title: 'H1:LSC-PR_GAIN_OUT16',
    axis: 'pl-[36px]',
    x: [-5614, 5395],
    y: [-145.7, 140],
    ticks: '120 100 80 60 40 20 0 -20 -40 -60 -80 -100 -120 -140',
    strong: [100, 0, -100],
    color: '#bcbd22',
    view: '0 0 1000 350',
    mean: '0,117 1000,117',
    max: '0,117 1000,117',
    min: '0,117 1000,117',
  },
  {
    title: 'H1:CAL-CS_TDEP_KAPPA_C_OUTPUT',
    axis: 'pl-[51px]',
    x: [-5397, 5389],
    y: [0.994624, 1.001561],
    ticks: '1.001 1.00 0.999 0.998 0.997 0.996 0.995',
    strong: [1],
    color: '#17becf',
    view: '101 81 1359 1051',
    mean: '101,434 109,452 118,467 125,466 132,430 140,412 148,450 155,473 163,472 170,410 180,390 187,392 195,412 207,392 213,440 221,538 229,500 236,444 245,482 253,470 261,428 268,470 275,540 285,542 291,440 298,370 306,354 314,370 320,458 328,450 336,422 344,450 351,504 359,410 366,340 375,341 382,380 389,398 397,393 405,430 412,455 419,502 427,480 434,452 442,451 449,480 457,515 464,556 472,490 479,432 487,470 495,492 503,474 511,485 518,495 526,486 534,506 541,505 547,455 556,448 563,474 571,468 578,478 586,508 593,478 601,480 609,504 617,512 624,502 631,476 638,485 646,478 654,464 662,470 668,518 676,510 684,465 691,448 698,420 706,400 714,412 722,404 729,360 737,342 744,370 751,455 759,520 767,532 774,545 782,490 789,420 796,440 804,470 812,434 819,430 827,490 835,516 843,516 850,480 857,434 865,465 873,478 880,455 889,432 896,427 903,427 911,465 917,500 926,455 933,452 950,455 957,438 964,437 971,478 978,496 986,518 994,490 1001,465 1009,474 1017,470 1024,452 1031,436 1037,464 1046,464 1053,410 1061,392 1069,404 1077,404 1083,350 1091,318 1099,324 1106,336 1114,348 1122,390 1129,408 1136,395 1144,306 1152,350 1159,424 1167,444 1174,395 1181,356 1189,408 1197,412 1204,378 1211,376 1219,412 1227,370 1234,328 1242,355 1250,340 1256,310 1264,294 1272,278 1279,238 1287,255 1295,264 1303,180 1310,156 1317,162 1325,235 1332,270 1340,305 1347,278 1355,410 1363,578 1370,460 1378,364 1386,415 1393,478 1400,483 1408,470 1416,481 1430,481 1436,620 1440,830 1445,1070 1452,1080 1460,1038',
    max: '101,415 109,440 118,452 125,450 132,408 140,395 148,410 155,460 163,458 170,395 180,374 187,378 195,388 207,390 213,410 221,490 229,470 236,408 245,462 253,455 261,404 268,430 275,500 285,510 291,410 298,350 306,346 314,356 320,430 328,430 336,410 344,420 351,475 359,355 366,325 375,325 382,360 389,380 397,386 405,410 412,425 419,460 427,462 434,444 442,440 449,462 457,485 464,530 472,440 479,420 487,418 495,470 503,458 511,462 518,475 526,480 534,490 541,455 547,450 556,438 563,450 571,438 578,465 586,490 593,458 601,458 609,490 617,500 624,490 631,450 638,465 646,462 654,450 662,440 668,490 676,480 684,440 691,435 698,400 706,388 714,395 722,345 729,335 737,330 744,326 751,410 759,490 767,510 774,510 782,430 789,400 796,420 804,445 812,405 819,405 827,440 835,495 843,500 850,440 857,420 865,430 873,440 880,430 889,416 896,412 903,414 911,425 917,478 926,432 933,430 941,440 957,425 964,420 971,455 978,480 986,500 994,478 1001,455 1009,460 1017,450 1024,425 1031,410 1037,440 1046,430 1053,375 1061,372 1069,375 1077,350 1083,312 1091,310 1099,312 1106,318 1114,322 1122,352 1129,380 1136,340 1144,282 1152,305 1159,370 1167,425 1174,345 1181,334 1189,380 1197,382 1204,356 1211,355 1219,370 1227,340 1234,308 1242,330 1250,315 1256,285 1264,280 1272,240 1279,230 1287,232 1295,225 1303,133 1310,132 1317,136 1325,190 1332,250 1340,265 1347,275 1355,300 1363,500 1370,340 1378,320 1386,325 1393,440 1400,442 1408,450 1416,480 1436,481 1440,700 1445,900 1452,1060 1460,875',
    min: '101,445 109,475 118,480 125,486 132,460 140,435 148,462 155,476 163,476 170,440 180,412 187,414 195,416 207,400 213,470 221,570 229,540 236,490 245,514 253,490 261,460 268,520 275,560 285,562 291,500 298,410 306,375 314,400 320,485 328,475 336,450 344,485 351,524 359,440 366,360 375,368 382,400 389,405 397,408 405,450 412,480 419,524 427,515 434,465 442,468 449,500 457,540 464,586 472,560 479,460 487,490 495,514 503,490 511,500 518,514 526,500 534,520 541,516 547,470 556,462 563,488 571,486 578,495 586,526 593,500 601,490 609,512 617,516 624,514 631,490 638,500 646,486 654,470 662,495 668,522 676,520 684,485 691,462 698,440 706,430 714,420 722,410 729,390 737,360 744,420 751,490 759,540 767,565 774,575 782,530 789,450 796,460 804,480 812,470 819,460 827,515 835,522 843,524 850,510 857,460 865,485 873,492 880,480 889,455 896,440 903,450 911,500 917,530 926,475 933,465 950,460 957,450 964,470 971,520 978,522 986,524 994,510 1001,480 1009,506 1017,505 1024,480 1031,460 1037,485 1046,480 1053,440 1061,420 1069,430 1077,400 1083,380 1091,330 1099,340 1106,345 1114,370 1122,410 1129,420 1136,412 1144,340 1152,400 1159,468 1167,466 1174,430 1181,390 1189,414 1197,418 1204,412 1211,395 1219,418 1227,395 1234,350 1242,362 1250,345 1256,325 1264,300 1272,305 1279,255 1287,265 1295,270 1303,225 1310,195 1317,190 1325,260 1332,300 1340,335 1347,320 1355,500 1363,592 1370,580 1378,420 1386,450 1393,515 1400,524 1408,510 1416,486 1430,486 1436,900 1440,1030 1445,1078 1460,1080',
  },
  {
    title: 'H1:CAL-CS_TDEP_F_C_OUTPUT',
    axis: 'pl-[32px]',
    x: [-5401, 5393],
    y: [390.727, 406.65],
    ticks: '406 404 402 400 398 396 394 392',
    strong: [400],
    color: '#dc3c64',
    view: '94 81 1410 1051',
    mean: '94,482 98,470 104,468 112,474 119,476 126,482 133,475 142,466 150,461 165,458 173,445 182,444 190,441 197,452 204,464 211,460 219,428 227,440 234,449 240,449 250,434 258,440 266,438 274,414 281,405 289,402 297,418 305,428 313,427 321,420 330,414 338,414 344,424 352,418 360,418 368,436 376,432 385,430 393,425 408,424 416,412 424,398 431,390 439,400 447,410 454,400 465,400 470,397 480,407 488,404 494,396 502,368 509,374 517,380 525,382 533,398 548,390 564,397 572,391 580,381 590,384 603,385 611,393 625,395 645,392 653,403 661,410 668,406 676,406 683,400 690,412 697,440 706,445 715,446 722,454 732,460 740,472 748,488 756,496 768,499 775,480 782,464 790,463 798,486 806,500 815,487 824,500 832,522 840,530 847,514 855,503 863,507 870,512 878,530 888,548 896,562 904,570 912,562 918,556 934,565 942,585 950,600 957,595 965,600 980,603 988,598 996,582 1003,574 1012,574 1018,606 1026,618 1033,598 1042,610 1050,619 1060,618 1067,608 1075,595 1083,606 1090,626 1098,635 1106,635 1114,645 1121,686 1132,706 1152,706 1160,716 1168,734 1176,712 1185,703 1193,712 1201,740 1208,762 1215,770 1224,757 1232,758 1240,775 1248,790 1255,782 1262,757 1270,778 1280,792 1290,806 1301,820 1310,812 1318,838 1325,856 1333,862 1357,862 1364,872 1372,867 1380,848 1386,890 1392,901 1502,901',
    max: '98,462 112,470 126,478 142,462 165,455 173,440 190,430 204,452 211,450 219,408 228,430 240,440 250,428 266,432 274,405 289,398 305,422 321,415 338,408 350,412 360,400 368,428 393,420 416,405 431,384 447,395 462,394 470,376 480,395 488,396 494,372 502,364 520,376 540,386 564,392 580,379 603,380 622,388 640,384 650,390 661,402 668,388 683,384 690,400 697,435 715,432 730,440 740,462 750,485 768,494 775,462 790,458 800,470 815,484 830,490 842,512 855,500 870,508 890,540 904,560 918,550 936,560 950,588 965,586 980,590 996,578 1003,565 1015,566 1026,600 1036,584 1050,606 1067,600 1075,586 1085,600 1100,628 1112,632 1121,660 1132,700 1152,700 1168,715 1185,700 1195,702 1208,748 1224,748 1235,750 1248,775 1262,752 1280,785 1295,798 1305,798 1316,815 1330,858 1357,860 1370,850 1380,843 1387,855 1392,880 1395,900 1502,901',
    min: '98,480 112,480 126,486 142,472 165,464 173,460 190,446 204,475 215,462 222,450 234,460 243,455 255,445 266,445 280,412 297,430 305,434 321,426 338,420 352,424 368,440 376,438 408,428 424,404 447,414 465,410 485,410 500,396 510,380 533,412 548,400 564,400 585,388 605,388 622,408 640,408 653,408 668,414 683,408 695,445 715,455 732,468 748,492 768,503 782,480 795,480 806,506 824,510 832,532 842,534 855,508 870,520 888,560 904,575 918,566 934,570 948,603 962,618 975,614 988,605 1000,590 1010,580 1020,620 1036,614 1050,626 1067,612 1080,610 1090,632 1110,645 1118,690 1130,710 1155,712 1168,740 1180,725 1193,725 1208,768 1215,774 1228,764 1240,795 1250,795 1262,770 1280,800 1300,828 1312,832 1325,862 1345,866 1368,876 1385,880 1390,903 1502,901',
  },
  {
    title: 'H1:CDS-SENSMON_CAL_SNSW_EFFECTIVE_RANGE_MPC',
    axis: 'pl-[33px]',
    x: [-5387, 5395],
    y: [92.75, 107.547],
    ticks: '106 104 102 100 98 96 94',
    strong: [100],
    color: '#f09090',
    view: '82 73 1461 947',
    mean: '82,530 91,570 99,567 107,536 114,570 123,590 130,543 138,625 147,626 149,1022 169,1022 172,520 179,477 187,478 195,493 203,450 211,452 219,478 228,482 235,540 243,612 252,633 260,575 268,560 278,556 285,525 292,542 301,541 309,513 317,590 326,638 334,528 343,532 350,552 358,502 366,490 368,1022 388,1022 391,580 399,537 407,516 408,1022 429,1022 431,555 439,603 447,603 456,552 457,1022 487,1022 488,503 504,528 512,492 521,490 529,512 537,480 545,420 553,445 561,464 569,446 577,450 585,510 594,512 602,496 610,471 618,504 626,488 635,502 642,496 650,464 658,515 666,490 674,402 683,396 691,480 699,495 707,499 715,496 723,464 731,540 740,556 748,490 756,480 764,570 772,628 780,560 788,520 796,465 805,446 813,475 821,444 829,441 837,450 845,490 853,556 861,510 869,492 877,444 886,459 894,458 902,450 910,372 918,376 926,393 934,394 942,372 950,410 958,470 967,534 975,455 983,425 990,475 995,1022 1030,1022 1032,480 1040,376 1048,425 1056,480 1064,376 1072,412 1080,420 1089,420 1091,1022 1112,1022 1113,552 1121,638 1129,470 1137,445 1146,415 1154,476 1162,462 1170,425 1178,402 1186,440 1195,522 1203,515 1211,442 1219,470 1226,490 1229,1022 1250,1022 1251,660 1259,768 1262,1022 1282,1022 1283,812 1291,834 1300,484 1308,620 1316,768 1325,465 1333,486 1341,438 1349,482 1357,700 1363,1022 1383,1022 1389,522 1396,1022 1410,1022 1414,600 1420,800 1424,1022',
    max: '82,508 91,556 99,552 107,520 114,522 123,548 130,534 160,534 172,520 179,444 187,444 195,465 203,416 212,416 219,458 228,462 235,500 243,590 252,588 260,496 285,496 292,500 301,502 309,468 317,470 326,540 334,502 343,506 350,528 358,461 366,461 383,628 391,560 399,530 407,512 415,512 423,552 439,552 447,542 460,542 466,1022 478,1022 486,485 504,490 515,485 529,486 537,402 545,402 553,430 561,464 569,387 577,387 585,488 594,488 602,441 611,441 618,480 626,475 635,468 642,434 650,434 658,490 666,430 674,358 683,358 691,450 699,466 707,466 715,434 725,434 731,500 740,496 748,466 756,466 764,540 772,570 780,510 788,480 796,430 804,430 813,470 821,408 845,404 850,470 861,455 869,416 877,414 886,420 894,416 902,368 912,368 920,372 928,352 936,346 942,348 950,410 958,420 967,500 975,368 984,366 990,438 1000,436 1013,425 1024,556 1032,415 1040,345 1048,348 1056,374 1072,378 1080,364 1090,364 1096,496 1104,418 1113,420 1121,440 1129,458 1137,380 1146,380 1154,480 1162,450 1170,410 1178,396 1186,396 1195,478 1203,430 1211,428 1219,460 1226,490 1235,520 1243,460 1251,454 1259,426 1267,426 1276,690 1285,690 1293,500 1300,392 1308,394 1318,432 1330,426 1341,422 1349,460 1357,560 1366,1022 1376,1022 1381,522 1397,522 1405,650 1413,526 1421,526 1425,1022 1453,1022 1454,608 1463,608 1466,1022',
    min: '82,540 91,580 99,580 107,560 114,622 123,622 130,560 138,718 146,720 149,1022 168,1022 172,545 179,500 187,510 195,508 203,470 211,494 228,496 235,616 243,620 252,650 262,652 268,622 277,620 285,560 309,545 317,710 326,714 334,555 350,555 358,530 366,530 369,1022 388,1022 392,600 406,560 409,1022 429,1022 432,590 440,658 448,658 455,580 463,1022 486,1022 490,552 504,558 512,514 522,490 529,532 537,530 545,450 553,450 561,490 569,495 577,530 594,540 602,540 610,490 618,505 626,490 635,537 645,535 650,500 658,522 666,522 674,440 683,442 691,516 699,518 707,540 715,538 723,520 731,584 740,584 748,520 756,505 764,658 773,658 780,580 788,560 796,490 804,480 813,470 821,478 837,484 845,600 855,605 861,540 869,540 877,490 886,490 894,506 902,500 910,395 918,400 926,422 934,420 942,400 950,430 958,545 970,545 975,508 990,510 994,1022 1029,1022 1033,530 1040,415 1048,545 1056,545 1064,400 1072,455 1080,460 1089,500 1092,1022 1112,1022 1114,758 1121,760 1129,510 1137,482 1146,464 1154,485 1162,485 1170,440 1178,410 1186,460 1195,562 1203,562 1211,460 1219,490 1224,540 1227,1022 1250,1022 1252,720 1260,1000 1262,1022 1290,1022 1297,600 1307,965 1316,966 1323,600 1325,526 1333,524 1341,450 1349,560 1358,1022 1384,1022 1389,560 1393,1022 1411,1022 1415,620 1418,1022',
  },
];

const TABS = ['offline', 'trigger', 'cursors'];

const BUTTON =
  'rounded-[3px] border border-[#8f8f8f] bg-gradient-to-b from-[#f4f4f4] to-[#c9c9c9] text-center';
const FIELD = 'h-[23px] rounded-[3px] border border-[#a5a19d] bg-white px-[3px]';

/** One trend plot: title, grid, axes and the mean / min / max traces. */
function TrendPlot({ panel }: { panel: Panel }) {
  const px = (v: number) => `${((v - panel.x[0]) / (panel.x[1] - panel.x[0])) * 100}%`;
  const py = (v: number) => `${((panel.y[1] - v) / (panel.y[1] - panel.y[0])) * 100}%`;
  const ticks = panel.ticks.split(' ');

  return (
    <figure className={`flex min-w-0 flex-col ${panel.axis}`}>
      <figcaption className="flex h-[31px] items-center justify-center pt-[2px] text-[15px] whitespace-nowrap text-[#969696]">
        {panel.title} [m-trend]
      </figcaption>
      <svg className="block min-h-[200px] w-full flex-1 overflow-visible">
        {/* Grid */}
        <g shapeRendering="crispEdges">
          {panel.minor?.map((v) => (
            <line key={v} x1="0" x2="100%" y1={py(v)} y2={py(v)} stroke="#0e0e0e" />
          ))}
          {ticks.map((t) => (
            <line
              key={t}
              x1="0"
              x2="100%"
              y1={py(Number(t))}
              y2={py(Number(t))}
              stroke={panel.strong.includes(Number(t)) ? '#222222' : '#131313'}
            />
          ))}
          {X_TICKS.map((v) => (
            <line
              key={v}
              x1={px(v)}
              x2={px(v)}
              y1="0"
              y2="100%"
              stroke={v === 0 ? '#262626' : v % 2000 === 0 ? '#181818' : '#0e0e0e'}
            />
          ))}
        </g>

        {/* Traces */}
        <svg width="100%" height="100%" viewBox={panel.view} preserveAspectRatio="none">
          <g fill="none" stroke={panel.color} shapeRendering="crispEdges">
            {[panel.max, panel.min].map((points, i) => (
              <polyline
                key={i}
                points={points}
                strokeOpacity="0.45"
                strokeDasharray="4 2"
                vectorEffect="non-scaling-stroke"
              />
            ))}
            <polyline points={panel.mean} vectorEffect="non-scaling-stroke" />
          </g>
        </svg>

        {/* Axes */}
        <g stroke="#969696" shapeRendering="crispEdges">
          <line x1="0" x2="0" y1="0" y2="100%" />
          <line x1="0" x2="100%" y1="100%" y2="100%" />
        </g>
        <g fill="#969696" className="text-[12px]">
          {ticks.map((t) => (
            <text key={t} x="0" y={py(Number(t))} dx="-5" dy="5" textAnchor="end">
              {t}
            </text>
          ))}
          {X_LABELS.map((v) => (
            <text key={v} x={px(v)} y="100%" dy="13" textAnchor="middle">
              {v}
            </text>
          ))}
        </g>
      </svg>
      <div className="h-[27px]" />
    </figure>
  );
}

function TitleBar() {
  return (
    <header className="flex h-[31px] items-center border-t border-[#777777] bg-gradient-to-b from-[#f7f7f7] to-[#e9e9e8]">
      <svg className="ml-px h-5 w-5 shrink-0" viewBox="0 0 20 20">
        <rect x="0.5" y="1.5" width="18" height="17" fill="#f4f4f0" stroke="#9a9a96" />
        <rect x="1" y="2" width="17" height="3" fill="#4a74b4" />
        <rect x="1" y="14" width="17" height="4" fill="#dcdcd6" />
      </svg>
      <h1 className="min-w-0 flex-1 overflow-hidden text-center text-[13px] font-bold whitespace-nowrap text-[#111111]">
        ndscope: H1:TCS-ITMX_RH_UPPERPOWER H1:TCS-ITMY_RH_UPPERPOWER H1:TCS-ITMX_CO2_LSRPWR_MTR_OUTPUT
        H1:TCS-ITMY_CO2_LSRPWR_MTR_OUTPUT H1:LSC-POPAIR_B_RF18_I_NORM_MON
        H1:LSC-POPAIR_B_RF90_I_NORM_MON H1:ASC-Y_PWR_CIRC_OUT16 H1:ASC-X_PWR_CIRC_OUT16
        H1:LSC-PR_GAIN
      </h1>
      <div className="flex h-[26px] w-[92px] shrink-0 items-center justify-around self-start rounded-bl-lg border-b border-l border-[#adadad] bg-gradient-to-b from-[#d0d0d0] to-[#b8b8b8]">
        <button aria-label="Keep above">
          <svg width="12" height="14" viewBox="0 0 12 14" fill="#ffffff" stroke="#7c7c7c">
            <path d="M6 1.5 L10.5 6.5 L7.5 6.5 L7.5 11.5 L4.5 11.5 L4.5 6.5 L1.5 6.5 Z" />
          </svg>
        </button>
        <button aria-label="Minimize">
          <svg width="12" height="14" viewBox="0 0 12 14" fill="#ffffff" stroke="#7c7c7c">
            <rect x="2.5" y="8.5" width="7" height="3" />
          </svg>
        </button>
        <button aria-label="Restore">
          <svg width="12" height="14" viewBox="0 0 12 14" fill="#ffffff" stroke="#7c7c7c">
            <path d="M4.5 1.5 H11.5 V9.5 H4.5 Z M6.5 3.5 H9.5 V7.5 H6.5 Z" fillRule="evenodd" />
            <path d="M0.5 4.5 H7.5 V12.5 H0.5 Z M2.5 7 H5.5 V10.5 H2.5 Z" fillRule="evenodd" />
          </svg>
        </button>
        <button aria-label="Close">
          <svg width="12" height="14" viewBox="0 0 12 14" fill="none" strokeLinecap="square">
            <path d="M2.5 3 L9.5 11 M9.5 3 L2.5 11" stroke="#7c7c7c" strokeWidth="4" />
            <path d="M2.5 3 L9.5 11 M9.5 3 L2.5 11" stroke="#ffffff" strokeWidth="2" />
          </svg>
        </button>
      </div>
    </header>
  );
}

function ControlBar() {
  const [tab, setTab] = useState('offline');
  const [update, setUpdate] = useState(true);

  return (
    <footer className="flex h-[146px] flex-col px-[2px] pt-[2px] text-[13px] text-[#1a1a1a]">
      <div className="flex">
        {/* Span controls */}
        <div className="flex w-[100px] shrink-0 flex-col gap-[2px]">
          <button className={`${BUTTON} flex h-[70px] items-center justify-center gap-2`}>
            <svg width="11" height="12" viewBox="0 0 11 12">
              <path d="M1 1 L10 6 L1 11 Z" fill="#fafafa" stroke="#6f6f6f" />
            </svg>
            online
          </button>
          <button className={`${BUTTON} h-[23px]`}>reset span</button>
          <button className={`${BUTTON} h-[23px]`}>reset t0</button>
        </div>

        {/* Tabs */}
        <div className="ml-[6px] min-w-0 flex-1">
          <div className="flex h-[26px] items-end border-b border-[#b3afac]" role="tablist">
            {TABS.map((name) => (
              <button
                key={name}
                role="tab"
                aria-selected={tab === name}
                onClick={() => setTab(name)}
                className={
                  tab === name
                    ? 'h-[25px] rounded-t-[3px] border border-b-0 border-[#b3afac] bg-[#fcfcfb] px-[11px]'
                    : 'h-[23px] rounded-t-[3px] border border-b-0 border-l-0 border-[#b3afac] bg-[#e7e3e0] px-[11px]'
                }
              >
                {name}
              </button>
            ))}
          </div>
          <div className="border-t border-white pt-[10px]">
            <div className="flex items-center gap-[6px]">
              <label htmlFor="start-gps" className="w-[30px]">start</label>
              <input id="start-gps" className={`${FIELD} w-[150px]`} defaultValue="1237099689.341355" />
              <input aria-label="start date" className={`${FIELD} w-[180px]`} defaultValue="2019/03/20 06:47:51 UTC" />
            </div>
            <div className="mt-[6px] flex items-center gap-[6px]">
              <label htmlFor="end-gps" className="w-[30px]">end</label>
              <input id="end-gps" className={`${FIELD} w-[150px]`} defaultValue="1237110473.655081" />
              <input aria-label="end date" className={`${FIELD} w-[180px]`} defaultValue="2019/03/20 09:47:35 UTC" />
              <button className={`${BUTTON} h-[23px] w-[80px]`}>now</button>
            </div>
            <div className="mt-[8px] flex items-center gap-[6px]">
              <button className={`${BUTTON} h-[23px] w-[100px]`}>fetch</button>
              <label className="flex items-center gap-[5px]">
                <span className="grid h-[14px] w-[14px] place-items-center border border-[#b0acaa] bg-white">
                  <input
                    type="checkbox"
                    checked={update}
                    onChange={(e) => setUpdate(e.target.checked)}
                    className="col-start-1 row-start-1 h-3 w-3 appearance-none"
                  />
                  {update && (
                    <svg className="pointer-events-none col-start-1 row-start-1" width="8" height="9" viewBox="0 0 8 9">
                      <path d="M1 4.5 L3 7.5 L7 1" fill="none" stroke="#000000" strokeWidth="2" />
                    </svg>
                  )}
                </span>
                update on limit change
              </label>
            </div>
          </div>
        </div>

        {/* Collapse handle */}
        <div className="flex w-[30px] shrink-0 items-end justify-center pb-[38px]">
          <button aria-label="Toggle controls">
            <svg width="8" height="5" viewBox="0 0 8 5">
              <path d="M0 0 H8 V1 L4 5 L0 1 Z" fill="#000000" />
            </svg>
          </button>
        </div>
      </div>

      <div className="flex flex-1 items-center pt-[2px]">
        <span className="w-[106px]">ndscope 0.7.6</span>
        <span>NDS server: h1nds1:8088</span>
      </div>
    </footer>
  );
}

export default function App() {
  return (
    <div className="flex min-h-screen flex-col bg-[#efebe7] font-['DejaVu_Sans',sans-serif]">
      <TitleBar />
      <main className="mx-[2px] flex flex-1 flex-col bg-black pt-[9px]">
        <div className="grid flex-1 auto-rows-fr grid-cols-[608fr_606fr_608fr_685fr] gap-x-[10px] pr-[10px] pl-[9px]">
          {PANELS.map((panel) => (
            <TrendPlot key={panel.title} panel={panel} />
          ))}
        </div>
        <p className="h-[30px] text-center text-[16px] leading-[28px] text-[#e6e6e6]">
          seconds from Wed Mar 20 2019 09:50:31 UTC [1237110649.7491]
        </p>
      </main>
      <ControlBar />
    </div>
  );
}
